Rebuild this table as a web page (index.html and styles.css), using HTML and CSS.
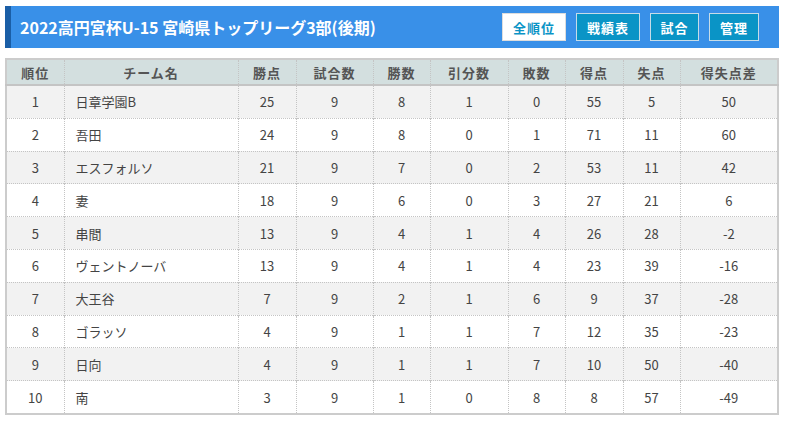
FILE: index.html
```html
<!DOCTYPE html>
<html lang="ja">
<head>
<meta charset="utf-8">
<link rel="stylesheet" href="styles.css">
</head>
<body>
<div class="page">
  <div class="titlebar">
    <h1 class="title">2022高円宮杯U-15 宮崎県トップリーグ3部(後期)</h1>
    <nav class="btns">
      <a class="btn active" style="width:64px">全順位</a>
      <a class="btn" style="width:64px">戦績表</a>
      <a class="btn" style="width:49px">試合</a>
      <a class="btn" style="width:50px">管理</a>
    </nav>
  </div>
  <table class="standings">
    <colgroup>
      <col style="width:58px"><col style="width:174px"><col style="width:58px"><col style="width:77px"><col style="width:57px"><col style="width:78px"><col style="width:57px"><col style="width:58px"><col style="width:57px"><col>
    </colgroup>
    <thead>
      <tr><th>順位</th><th>チーム名</th><th>勝点</th><th>試合数</th><th>勝数</th><th>引分数</th><th>敗数</th><th>得点</th><th>失点</th><th>得失点差</th></tr>
    </thead>
    <tbody>
      <tr><td>1</td><td class="name">日章学園B</td><td>25</td><td>9</td><td>8</td><td>1</td><td>0</td><td>55</td><td>5</td><td>50</td></tr>
      <tr><td>2</td><td class="name">吾田</td><td>24</td><td>9</td><td>8</td><td>0</td><td>1</td><td>71</td><td>11</td><td>60</td></tr>
      <tr><td>3</td><td class="name">エスフォルソ</td><td>21</td><td>9</td><td>7</td><td>0</td><td>2</td><td>53</td><td>11</td><td>42</td></tr>
      <tr><td>4</td><td class="name">妻</td><td>18</td><td>9</td><td>6</td><td>0</td><td>3</td><td>27</td><td>21</td><td>6</td></tr>
      <tr><td>5</td><td class="name">串間</td><td>13</td><td>9</td><td>4</td><td>1</td><td>4</td><td>26</td><td>28</td><td>-2</td></tr>
      <tr><td>6</td><td class="name">ヴェントノーバ</td><td>13</td><td>9</td><td>4</td><td>1</td><td>4</td><td>23</td><td>39</td><td>-16</td></tr>
      <tr><td>7</td><td class="name">大王谷</td><td>7</td><td>9</td><td>2</td><td>1</td><td>6</td><td>9</td><td>37</td><td>-28</td></tr>
      <tr><td>8</td><td class="name">ゴラッソ</td><td>4</td><td>9</td><td>1</td><td>1</td><td>7</td><td>12</td><td>35</td><td>-23</td></tr>
      <tr><td>9</td><td class="name">日向</td><td>4</td><td>9</td><td>1</td><td>1</td><td>7</td><td>10</td><td>50</td><td>-40</td></tr>
      <tr><td>10</td><td class="name">南</td><td>3</td><td>9</td><td>1</td><td>0</td><td>8</td><td>8</td><td>57</td><td>-49</td></tr>
    </tbody>
  </table>
</div>
</body>
</html>
```

FILE: styles.css
```css
html, body {
  margin: 0;
  padding: 0;
  background: #fff;
}
body {
  font-family: "Noto Sans CJK JP", "Noto Sans", sans-serif;
  color: #444;
}
.page {
  padding: 6px 7px 0 5px;
}
.titlebar {
  display: flex;
  align-items: center;
  justify-content: space-between;
  height: 42px;
  background: #3990e8;
  border-left: 6px solid #1a5ea6;
  padding: 0 20px 0 9px;
  box-sizing: border-box;
}
.title {
  margin: 0;
  color: #fff;
  font-size: 16px;
  font-weight: bold;
  line-height: 1;
}
.btns {
  display: flex;
  gap: 10px;
}
.btn {
  display: flex;
  align-items: center;
  justify-content: center;
  box-sizing: border-box;
  height: 28px;
  background: #0a94c6;
  border: 1px solid #c6dce8;
  color: #fff;
  font-size: 13px;
  font-weight: bold;
  letter-spacing: 1px;
}
.btn.active {
  background: #fff;
  color: #0a94c6;
  border-color: #ddd;
}
.standings {
  margin-top: 10px;
  width: 774px;
  table-layout: fixed;
  border-collapse: collapse;
  border: 2px solid #ccc;
  font-size: 13px;
}
.standings th {
  background: #d3dfdf;
  color: #555;
  font-weight: bold;
  height: 24px;
  padding: 0;
  border-left: 1px dotted #c4c4c4;
  border-bottom: 2px solid #c4c4c4;
  letter-spacing: 1px;
}
.standings td {
  height: 31.8px;
  padding: 0;
  text-align: center;
  border-left: 1px dotted #c4c4c4;
  border-top: 1px dotted #c4c4c4;
  color: #444;
}
.standings td.name {
  text-align: left;
  padding-left: 11px;
}
.standings tbody tr:nth-child(odd) td {
  background: #f2f2f2;
}
```
